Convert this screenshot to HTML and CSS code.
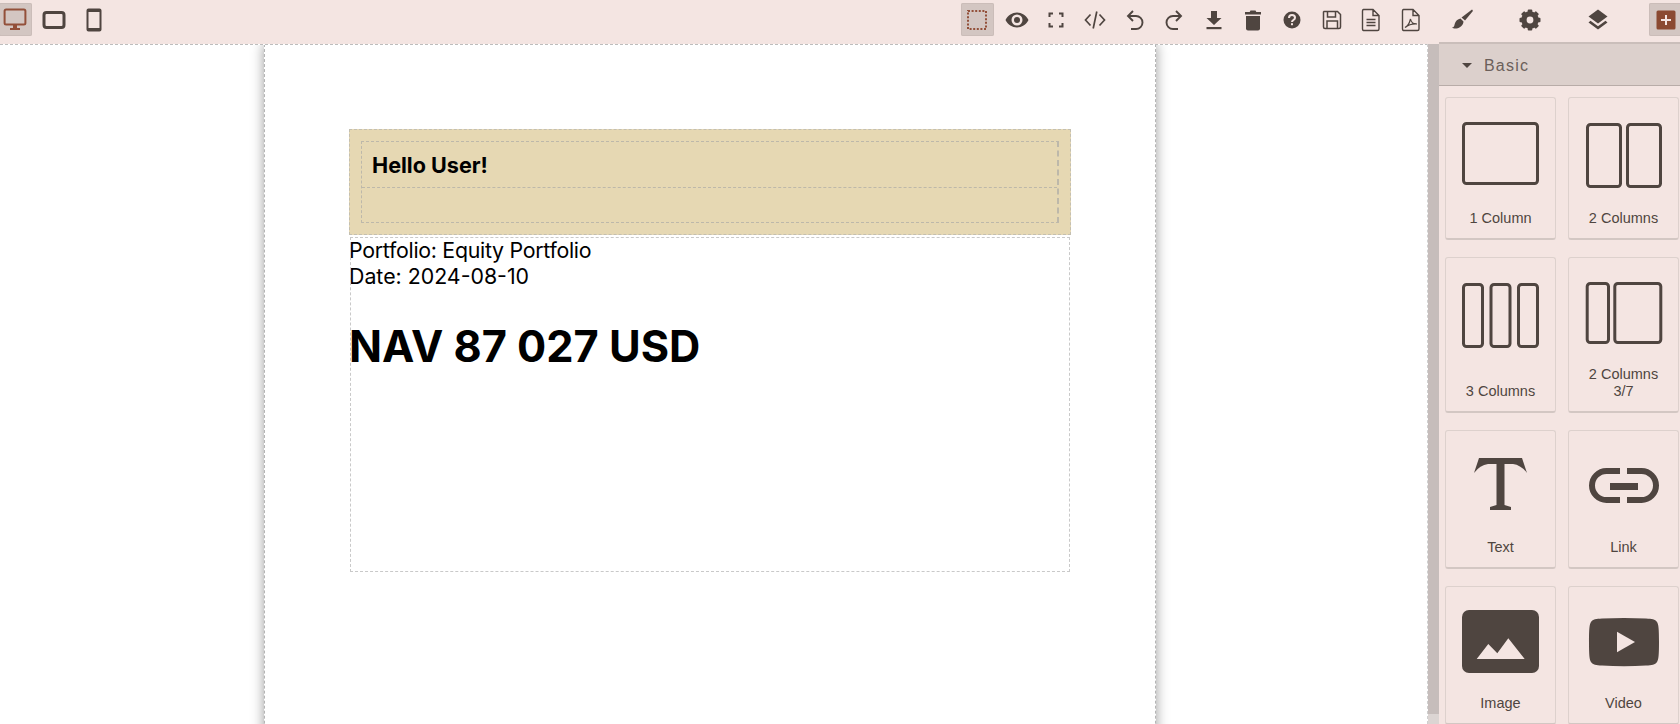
FILE: index.html
```html
<!DOCTYPE html>
<html lang="en">
<head>
    <meta charset="UTF-8">
    <title>Page Builder</title>
    <link rel="stylesheet" href="styles.css">
</head>
<body>

<div class="app">
    <div class="workspace">
        <div class="toolbar">
            <div class="tool-group devices">
                <div class="tool active">
                    <svg width="24" height="24" viewBox="0 0 24 24"><rect x="1.6" y="1.6" width="20.8" height="15" rx="1.5" fill="none" stroke="#93503a" stroke-width="2"/><path d="M10 17h4v3h3v2H7v-2h3z" fill="#93503a"/></svg>
                </div>
                <div class="tool">
                    <svg width="24" height="24" viewBox="0 0 24 24"><rect x="2" y="4.5" width="20" height="15" rx="2.5" fill="none" stroke="#4f4540" stroke-width="3"/></svg>
                </div>
                <div class="tool">
                    <svg width="24" height="24" viewBox="0 0 24 24"><path fill-rule="evenodd" d="M6.5 0.5h11a2 2 0 0 1 2 2v19a2 2 0 0 1-2 2h-11a2 2 0 0 1-2-2v-19a2 2 0 0 1 2-2zM6.5 4v16h11V4z" fill="#4f4540"/></svg>
                </div>
            </div>
            <div class="tool-group">
                <div class="tool active">
                    <svg width="24" height="24" viewBox="0 0 24 24"><rect x="3" y="3" width="18" height="18" fill="none" stroke="#93503a" stroke-width="2" stroke-dasharray="2 1.6"/></svg>
                </div>
                <div class="tool">
                    <svg width="24" height="24" viewBox="0 0 24 24"><path fill-rule="evenodd" d="M0.5 12C3 7.3 7.2 4.5 12 4.5S21 7.3 23.5 12C21 16.7 16.8 19.5 12 19.5S3 16.7 0.5 12zM12 6.5a5.5 5.5 0 1 0 0 11 5.5 5.5 0 0 0 0-11z" fill="#4f4540"/><circle cx="12" cy="12" r="3" fill="#4f4540"/></svg>
                </div>
                <div class="tool">
                    <svg width="24" height="24" viewBox="0 0 24 24"><path d="M5.5 9V5.5H9M15 5.5h3.5V9M18.500 15v3.500H15M9 18.500H5.500V15" fill="none" stroke="#4f4540" stroke-width="2"/></svg>
                </div>
                <div class="tool">
                    <svg width="24" height="24" viewBox="0 0 24 24"><path d="M7.500 6.500 2.500 12l5 5.500M16.500 6.500l5 5.500-5 5.500M13.800 3.500 10.200 20.500" fill="none" stroke="#4f4540" stroke-width="1.700"/></svg>
                </div>
                <div class="tool">
                    <svg width="24" height="24" viewBox="0 0 24 24"><path d="M10 3 5 8l5 5M5.500 8H13a6 6 0 0 1 0 13H8" fill="none" stroke="#4f4540" stroke-width="1.900"/></svg>
                </div>
                <div class="tool">
                    <svg width="24" height="24" viewBox="0 0 24 24"><path d="M14 3l5 5-5 5M18.500 8H11a6 6 0 0 0 0 13h5" fill="none" stroke="#4f4540" stroke-width="1.900"/></svg>
                </div>
                <div class="tool">
                    <svg width="24" height="24" viewBox="0 0 24 24"><path d="M9 3h6v7h4.500L12 17 4.500 10H9z" fill="#4f4540"/><rect x="4.500" y="19" width="15" height="2.200" fill="#4f4540"/></svg>
                </div>
                <div class="tool">
                    <svg width="24" height="24" viewBox="0 0 24 24"><path d="M9.500 2.500h5l.8 1.500H20v2.500H4V4h4.700z" fill="#4f4540"/><path d="M5 8h14v12.500a2 2 0 0 1-2 2H7a2 2 0 0 1-2-2z" fill="#4f4540"/></svg>
                </div>
                <div class="tool">
                    <svg width="24" height="24" viewBox="0 0 24 24"><circle cx="12" cy="12" r="8.500" fill="#4f4540"/><path d="M9 10c0-2 1.300-3 3-3s3 1 3 2.700c0 2.300-3 2.300-3 4.300" fill="none" stroke="#f4e5e2" stroke-width="2"/><rect x="11" y="15.200" width="2" height="2" fill="#f4e5e2"/></svg>
                </div>
                <div class="tool">
                    <svg width="24" height="24" viewBox="0 0 24 24"><path d="M4 3.500h13.500l3 3V19a1.500 1.500 0 0 1-1.500 1.500H5A1.500 1.500 0 0 1 3.500 19V4z" fill="none" stroke="#4f4540" stroke-width="1.500"/><path d="M7.500 3.500v5.500h8V3.500M7 20.500V13h10.500v7.500" fill="none" stroke="#4f4540" stroke-width="1.500"/></svg>
                </div>
                <div class="tool">
                    <svg width="24" height="24" viewBox="0 0 24 24"><path d="M4.500 1.500H14l6 6V21a1.500 1.500 0 0 1-1.500 1.500h-14A1.500 1.500 0 0 1 3.500 21V3a1.500 1.500 0 0 1 1-1.500zM14 1.500V7.500h6" fill="none" stroke="#4f4540" stroke-width="1.400"/><path d="M7.500 11.500h9M7.500 14.500h9M7.500 17.500h9" stroke="#4f4540" stroke-width="1.400"/></svg>
                </div>
                <div class="tool">
                    <svg width="24" height="24" viewBox="0 0 24 24"><path d="M4.500 1.500H14l6 6V21a1.500 1.500 0 0 1-1.500 1.500h-14A1.500 1.500 0 0 1 3.500 21V3a1.500 1.500 0 0 1 1-1.500zM14 1.500V7.500h6" fill="none" stroke="#4f4540" stroke-width="1.400"/><path d="M6 19.500c2.500-1 4.500-4.500 5.500-8.500.5 3 2.500 5 6.500 5-3.500-.3-8.500.8-12 3.500z" fill="none" stroke="#4f4540" stroke-width="1.200"/></svg>
                </div>
            </div>
        </div>

        <div class="canvas-row">
            <div class="canvas">
                <div class="page">
                    <div class="banner">
                        <div class="banner-inner">
                            <div class="greeting">Hello User!</div>
                            <div class="banner-empty"></div>
                        </div>
                    </div>
                    <div class="summary">
                        <div class="portfolio-line">Portfolio: Equity Portfolio</div>
                        <div>Date: 2024-08-10</div>
                        <div class="nav-value">NAV 87 027 USD</div>
                    </div>
                </div>
            </div>
            <div class="scrollbar"><div class="scroll-thumb"></div></div>
        </div>
    </div>

    <div class="panel">
        <div class="panel-tabs">
            <div class="tool">
                <svg width="24" height="24" viewBox="0 0 24 24"><path d="M22 1.500c.8.500 1 1.200.5 2L15 12.500l-3.500-3z" fill="#4f4540"/><path d="M10.500 10.500l3 3c-.3 4-3.500 6.500-7 7-1.700.3-3.500 0-4.500-1 2 0 2.200-1.500 2.700-3.500.8-3 3-5 5.800-5.500z" fill="#4f4540"/></svg>
            </div>
            <div class="tool">
                <svg width="24" height="24" viewBox="0 0 24 24">
                    <circle cx="12" cy="12" r="6.500" fill="none" stroke="#4f4540" stroke-width="4.500"/>
                    <g fill="#4f4540">
                        <rect x="9.700" y="1.500" width="4.600" height="21" rx="1"/>
                        <rect x="9.700" y="1.500" width="4.600" height="21" rx="1" transform="rotate(45 12 12)"/>
                        <rect x="9.700" y="1.500" width="4.600" height="21" rx="1" transform="rotate(90 12 12)"/>
                        <rect x="9.700" y="1.500" width="4.600" height="21" rx="1" transform="rotate(135 12 12)"/>
                    </g>
                    <circle cx="12" cy="12" r="3.400" fill="#f4e5e2"/>
                </svg>
            </div>
            <div class="tool">
                <svg width="24" height="24" viewBox="0 0 24 24"><path d="M12 1.500 21.500 8.500 12 15.500 2.500 8.500z" fill="#4f4540"/><path d="M4.500 12.800 2.500 14.500 12 21.500l9.500-7-2-1.700-7.500 5.500z" fill="#4f4540"/></svg>
            </div>
            <div class="tool active">
                <svg width="24" height="24" viewBox="0 0 24 24"><rect x="2.500" y="2.500" width="19" height="19" rx="1.500" fill="#8b4a32"/><path d="M12 7v10M7 12h10" stroke="#f4e5e2" stroke-width="2"/></svg>
            </div>
        </div>

        <div class="section-head">
            <span class="caret"></span>
            <span>Basic</span>
        </div>

        <div class="blocks">
            <div class="block">
                <svg class="block-icon" width="84" height="70" viewBox="0 0 84 70"><rect x="4.500" y="3.500" width="74" height="60" rx="3"/></svg>
                <div class="block-label">1 Column</div>
            </div>
            <div class="block">
                <svg class="block-icon" width="84" height="70" viewBox="0 0 84 70"><rect x="5.500" y="4.500" width="33" height="62" rx="3"/><rect x="45.500" y="4.500" width="33" height="62" rx="3"/></svg>
                <div class="block-label">2 Columns</div>
            </div>
            <div class="block">
                <svg class="block-icon" width="84" height="70" viewBox="0 0 84 70"><rect x="4.500" y="4.500" width="19" height="62" rx="3"/><rect x="32" y="4.500" width="19" height="62" rx="3"/><rect x="59.500" y="4.500" width="19" height="62" rx="3"/></svg>
                <div class="block-label">3 Columns</div>
            </div>
            <div class="block">
                <svg class="block-icon" width="84" height="70" viewBox="0 0 84 70"><rect x="5.200" y="3.500" width="21.300" height="59" rx="3"/><rect x="32.800" y="3.500" width="46" height="59" rx="3"/></svg>
                <div class="block-label">2 Columns<br>3/7</div>
            </div>
            <div class="block">
                <svg class="block-icon solid" width="84" height="70" viewBox="0 0 84 70"><path d="M20 5H63L68 20Q62 12 54 11H45.500V52L52 54V57H31V54L37.500 52V11H29Q21 12 15 20Z"/></svg>
                <div class="block-label">Text</div>
            </div>
            <div class="block">
                <svg class="block-icon solid" width="84" height="70" viewBox="0 0 84 70"><path d="M38 18H24.500a14.500 14.500 0 0 0 0 29H38M45 18H59.500a14.500 14.500 0 0 1 0 29H45" style="fill:none;stroke:#4f4540;stroke-width:6"/><rect x="28" y="30" width="28" height="7"/></svg>
                <div class="block-label">Link</div>
            </div>
            <div class="block">
                <svg class="block-icon solid" width="84" height="70" viewBox="0 0 84 70"><rect x="3" y="1" width="77" height="63" rx="7"/><path d="M17.700 50 29.300 35 38.300 44.300 49.300 29.300 65.700 50Z" style="fill:#f4e5e2"/></svg>
                <div class="block-label">Image</div>
            </div>
            <div class="block">
                <svg class="block-icon solid" width="84" height="70" viewBox="0 0 84 70"><path d="M7 33C7 20 7.500 15 9 13 11 10 14 9.800 20 9.400 34 8.700 50 8.700 64 9.400 70 9.800 73 10 75 13 76.500 15 77 20 77 33 77 46 76.500 51 75 53 73 56 70 56.200 64 56.600 50 57.300 34 57.300 20 56.600 14 56.200 11 56 9 53 7.500 51 7 46 7 33Z"/><path d="M35 22.700 53 33 35 43.300Z" style="fill:#f4e5e2"/></svg>
                <div class="block-label">Video</div>
            </div>
        </div>
    </div>
</div>

</body>
</html>
```

FILE: styles.css
```css
* {
    box-sizing: border-box;
}

html, body {
    height: 100%;
    margin: 0;
    overflow: hidden;
}

body {
    font-family: "Liberation Sans", Arial, sans-serif;
    background-color: #fff;
    color: #000;
}

.app {
    display: flex;
    height: 724px;
}

/* left side: toolbar + canvas */
.workspace {
    flex: 1;
    min-width: 0;
    display: flex;
    flex-direction: column;
}

.toolbar {
    height: 44px;
    flex-shrink: 0;
    display: flex;
    justify-content: space-between;
    align-items: flex-start;
    padding: 3px 12px 0 0;
    background-color: #f4e5e2;
}

.tool-group {
    display: flex;
    gap: 6.4px;
}

.devices {
    margin-left: -1.5px;
}

.tool {
    width: 33px;
    height: 33px;
    flex-shrink: 0;
    display: flex;
    justify-content: center;
    align-items: center;
    border-radius: 2px;
}

.tool.active {
    background-color: #d3c6c2;
    box-shadow: inset 0 0 0 1px #cbbdb9;
}

.canvas-row {
    flex: 1;
    min-height: 0;
    display: flex;
}

.canvas {
    flex: 1;
    min-width: 0;
    overflow: hidden;
    padding-left: 264px;
    border-top: 1px dashed #bdbdbd;
    border-right: 1px dashed #cfcfcf;
}

.scrollbar {
    width: 11px;
    flex-shrink: 0;
    background-color: #dcd5d3;
}

.scroll-thumb {
    height: 670px;
    background-color: #c6bdbb;
}

.page {
    width: 892px;
    height: 800px;
    margin-top: -1px;
    padding: 84px 84px 0;
    border: 1px dashed #b5b5b5;
    background-color: #fff;
    box-shadow: 0 0 12px rgba(0, 0, 0, 0.4);
    font-family: Inter, "Liberation Sans", sans-serif;
}

.banner {
    height: 106px;
    padding: 11px;
    background-color: #e6d8b3;
    border: 1px dashed #c4bfb0;
}

.banner-inner {
    height: 82px;
    border: 1px dashed #bdb8aa;
    border-right-width: 2px;
}

.greeting {
    height: 46px;
    padding: 0 10px;
    font-size: 21.6px;
    font-weight: 700;
    line-height: 46px;
    border-bottom: 1px dashed #bdb8aa;
}

.summary {
    height: 337px;
    margin-top: 1px;
    padding-top: 1px;
    outline: 1px dashed #c9c9c9;
    outline-offset: -2px;
    font-size: 21.33px;
    line-height: 26px;
}

.portfolio-line {
    letter-spacing: -0.28px;
}

.nav-value {
    margin-top: 30px;
    font-size: 43.3px;
    font-weight: 700;
    line-height: 54px;
}

/* right side: blocks panel */
.panel {
    width: 241px;
    flex-shrink: 0;
    overflow: hidden;
    background-color: #f4e5e2;
}

.panel-tabs {
    height: 44px;
    display: flex;
    align-items: flex-start;
    gap: 35px;
    padding: 3px 0 0 6px;
    border-bottom: 2px solid #cabeba;
}

.section-head {
    height: 42px;
    display: flex;
    align-items: center;
    padding: 2px 0 0 23px;
    gap: 12px;
    background-color: #dcd0cc;
    border-bottom: 1px solid #b8aca8;
    color: #6b5f5a;
    font-size: 16px;
    letter-spacing: 1.2px;
}

.caret {
    width: 0;
    height: 0;
    border-left: 5px solid transparent;
    border-right: 5px solid transparent;
    border-top: 5px solid #4f4540;
}

.blocks {
    display: grid;
    grid-template-columns: 111px 111px;
    grid-template-rows: 143px 156px 139px 139px;
    column-gap: 12px;
    row-gap: 17px;
    padding: 11px 0 0 6px;
}

.block {
    display: flex;
    flex-direction: column;
    align-items: center;
    padding: 22px 0 11px;
    text-align: center;
    border: 1px solid #ddd1cd;
    border-bottom: 2px solid #d3c7c3;
    border-radius: 3px;
}

.block-icon {
    display: block;
    fill: none;
    stroke: #4f4540;
    stroke-width: 3;
}

.block-icon.solid {
    fill: #4f4540;
    stroke: none;
}

.block-label {
    margin-top: auto;
    color: #4f4540;
    font-size: 14.5px;
    line-height: 17px;
}
```
